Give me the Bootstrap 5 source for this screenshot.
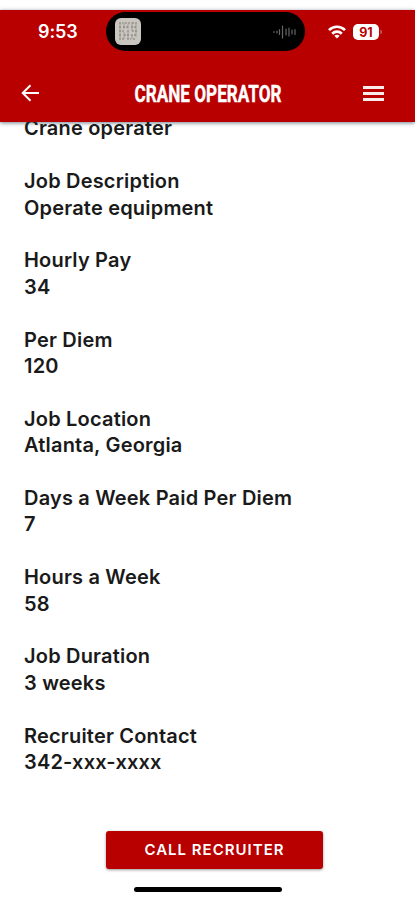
<!DOCTYPE html>
<html lang="en">
<head>
<meta charset="utf-8">
<meta name="viewport" content="width=device-width, initial-scale=1">
<title>Crane Operator</title>
<link href="https://cdn.jsdelivr.net/npm/bootstrap@5.3.0/dist/css/bootstrap.min.css" rel="stylesheet">
<style>
body{font-family:Inter,"Liberation Sans",sans-serif;background:#fff;color:#1a1a1a}
.screen{width:415px;height:900px;padding-top:10px}
.app-top{height:112px;background:#b80000;box-shadow:0 1px 4px rgba(40,60,75,.65);z-index:2}
.status{height:43px;padding:2px 0 0 38px}
.clock{font-size:18px;font-weight:600;line-height:40px;width:68px;letter-spacing:-.1px}
.island{width:199px;height:39px;border-radius:20px;background:#000;padding:0 9px 0 9px}
.indicators{height:39px;margin-left:23px;gap:7px}
.title-row{height:69px;padding:11px 31px 0 20px}
.title-row svg{display:block;overflow:visible}
.details{padding:0 24px;margin-top:-6.6px;font-size:20px;line-height:26.4px;font-weight:600;letter-spacing:.19px}
.details dt,.details dd{font-weight:inherit;margin:0}
.details dd{margin-bottom:26.4px}
.call-btn{width:217px;height:38px;border-radius:3px;background:#b80000;color:#fff;font-size:15px;font-weight:600;letter-spacing:1px;padding:0;box-shadow:0 1px 3px rgba(0,0,0,.4)}
.call-btn:hover{background:#a00000;color:#fff}
.bottom-area{padding:0 0 8px;margin-left:14px}
.home-bar{width:148px;height:5px;border-radius:3px;background:#000;margin-top:18px;margin-right:13px}
</style>
</head>
<body>
<div class="screen d-flex flex-column overflow-hidden">
  <header class="app-top position-relative flex-shrink-0 text-white">
    <div class="status d-flex align-items-start">
      <div class="clock flex-shrink-0">9:53</div>
      <div class="island d-flex align-items-center justify-content-between flex-shrink-0">
        <svg width="26" height="27" viewBox="0 0 26 27"><rect width="26" height="27" rx="6" fill="#c9c5bf"/><g fill="none" stroke="#817d77" stroke-width="1"><path d="M4 5h4m2 0h5m2 0h5M4 9h2m2 0h5m3 0h6M4 13h6m2 0h3m2 0h5M4 17h3m2 0h5m2 0h6M4 21h5m3 0h4m2 0h3" stroke-dasharray="2 1"/><path d="M5 5v15M9 4v7m0 3v7M13 6v5m0 3v7M17 4v9m0 4v4M21 6v13" opacity=".55"/></g></svg>
        <svg width="23" height="14" viewBox="0 0 23 14" fill="none" stroke="#666" stroke-width="1.2" stroke-linecap="round"><path d="M1 6.500v1M4 6v2M6.500 4.500v5M9.500 1v12M13 4v6M16 3v8M19 5v4M22 4.500v5"/></svg>
      </div>
      <div class="indicators d-flex align-items-center flex-shrink-0">
        <svg width="18" height="14" viewBox="0 0 18 14" fill="none" stroke="#fff" stroke-width="2.700"><path d="M1 5.100C5.500.600 12.500.600 17 5.100M4.200 8.700c2.700-2.700 6.900-2.700 9.600 0"/><path d="M9 13.500 6.300 10.800q2.700-2.200 5.400 0Z" fill="#fff" stroke="none"/></svg>
        <svg width="31" height="16" viewBox="0 0 31 16"><rect width="26" height="16" rx="5" fill="#fff"/><path d="M27.500 5.300q2.600 2.700 0 5.400Z" fill="#df7777"/><text x="13" y="12.500" text-anchor="middle" font-family="Inter,sans-serif" font-size="12.500" font-weight="700" fill="#b80000">91</text></svg>
      </div>
    </div>
    <div class="title-row d-flex align-items-center justify-content-between">
      <svg width="20" height="18" viewBox="0 0 20 18" fill="none" stroke="#fff" stroke-width="2"><path d="M19 9H3M10.500 1.200 2.700 9l7.800 7.800"/></svg>
      <svg width="156" height="30" viewBox="0 0 156 30" style="margin-left:12px"><text x="4.500" y="23.500" textLength="147" lengthAdjust="spacingAndGlyphs" font-family="Roboto,sans-serif" font-size="24" font-weight="700" fill="#fff" stroke="#fff" stroke-width=".4">CRANE OPERATOR</text></svg>
      <svg width="21" height="15" viewBox="0 0 21 15" fill="#fff" opacity=".92"><path d="M0 0h21v3H0zM0 6h21v3H0zM0 12h21v3H0z"/></svg>
    </div>
  </header>
  <dl class="details mb-0 flex-grow-1">
    <dd>Crane operater</dd>
    <dt>Job Description</dt><dd>Operate equipment</dd>
    <dt>Hourly Pay</dt><dd>34</dd>
    <dt>Per Diem</dt><dd>120</dd>
    <dt>Job Location</dt><dd>Atlanta, Georgia</dd>
    <dt>Days a Week Paid Per Diem</dt><dd>7</dd>
    <dt>Hours a Week</dt><dd>58</dd>
    <dt>Job Duration</dt><dd>3 weeks</dd>
    <dt>Recruiter Contact</dt><dd>342-xxx-xxxx</dd>
  </dl>
  <footer class="bottom-area d-flex flex-column align-items-center flex-shrink-0">
    <button type="button" class="btn call-btn">CALL RECRUITER</button>
    <div class="home-bar"></div>
  </footer>
</div>
<script src="https://cdn.jsdelivr.net/npm/bootstrap@5.3.0/dist/js/bootstrap.bundle.min.js"></script>
</body>
</html>
